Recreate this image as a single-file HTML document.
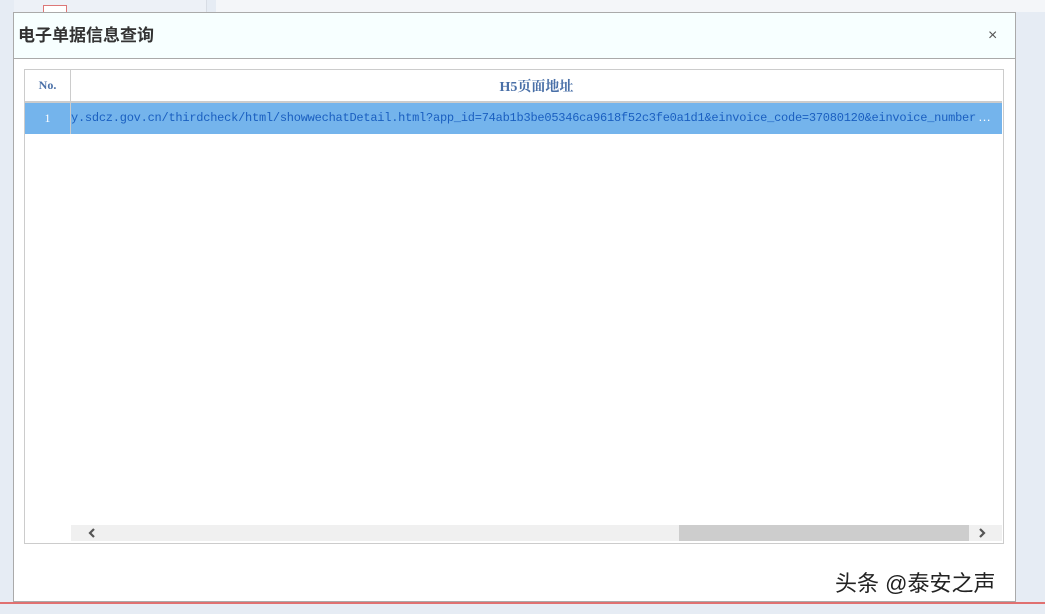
<!DOCTYPE html><html><head><style>
body{margin:0;width:1045px;height:614px;background:#e6ecf4;position:relative;overflow:hidden;font-family:"Liberation Sans","Noto Sans CJK SC",sans-serif}
.a{position:absolute}
</style></head><body>
<div class="a" style="left:14px;top:0;width:192px;height:12px;background:#edf1f7;border-right:1px solid #d8dde5"></div>
<div class="a" style="left:43px;top:5px;width:22px;height:7px;border:1px solid #d77;border-bottom:none;background:#fff"></div>
<div class="a" style="left:216px;top:0;width:829px;height:12px;background:#f4f6f9"></div>
<div class="a" style="left:0;top:602px;width:1045px;height:2px;background:#e07070"></div>
<div class="a" style="left:13px;top:12px;width:1001px;height:588px;background:#fff;border:1px solid #aaa"></div>
<div class="a" style="left:14px;top:13px;width:1001px;height:45px;background:#f7ffff;border-bottom:1px solid #aaa"></div>
<div class="a" style="left:18px;top:25px;font-size:17px;font-weight:bold;color:#333;line-height:22px">电子单据信息查询</div>
<div class="a" style="left:988px;top:25px;font-size:16px;color:#555;line-height:22px">×</div>
<div class="a" style="left:24px;top:69px;width:978px;height:473px;border:1px solid #ccc;background:#fff"></div>
<div class="a" style="left:25px;top:70px;width:977px;height:31px;border-bottom:2px solid #ccc;background:#fff"></div>
<div class="a" style="left:70px;top:70px;width:1px;height:64px;background:#ccc"></div>
<div class="a" style="left:25px;top:78px;width:45px;text-align:center;font:bold 12px 'Liberation Serif',serif;color:#4a70a8">No.</div>
<div class="a" style="left:71px;top:76px;width:931px;text-align:center;font:bold 14px 'Liberation Serif','Noto Serif CJK SC',serif;color:#4a70a8">H5页面地址</div>
<div class="a" style="left:25px;top:103px;width:977px;height:31px;background:#74b4ec"></div>
<div class="a" style="left:70px;top:103px;width:1px;height:31px;background:#ccc"></div>
<div class="a" style="left:25px;top:111px;width:45px;text-align:center;font:12px 'Liberation Serif',serif;color:#fff">1</div>
<div class="a" style="left:71px;top:111px;width:908px;overflow:hidden;white-space:nowrap;font:12px 'Liberation Mono',monospace;color:#1a5fc0;letter-spacing:-0.24px">y.sdcz.gov.cn/thirdcheck/html/showwechatDetail.html?app_id=74ab1b3be05346ca9618f52c3fe0a1d1&amp;einvoice_code=37080120&amp;einvoice_number</div>
<div class="a" style="left:978px;top:109px;color:#fff;font-size:13px">…</div>
<div class="a" style="left:71px;top:525px;width:931px;height:16px;background:#f0f0f0"></div>
<div class="a" style="left:679px;top:525px;width:290px;height:16px;background:#cdcdcd"></div>
<svg class="a" style="left:86px;top:527px" width="12" height="12"><path d="M8 2L4 6L8 10" stroke="#555" stroke-width="2.2" fill="none"/></svg>
<svg class="a" style="left:976px;top:527px" width="12" height="12"><path d="M4 2L8 6L4 10" stroke="#555" stroke-width="2.2" fill="none"/></svg>
<div class="a" style="left:835px;top:566px;font-size:22px;color:#222">头条 @泰安之声</div>
</body></html>
